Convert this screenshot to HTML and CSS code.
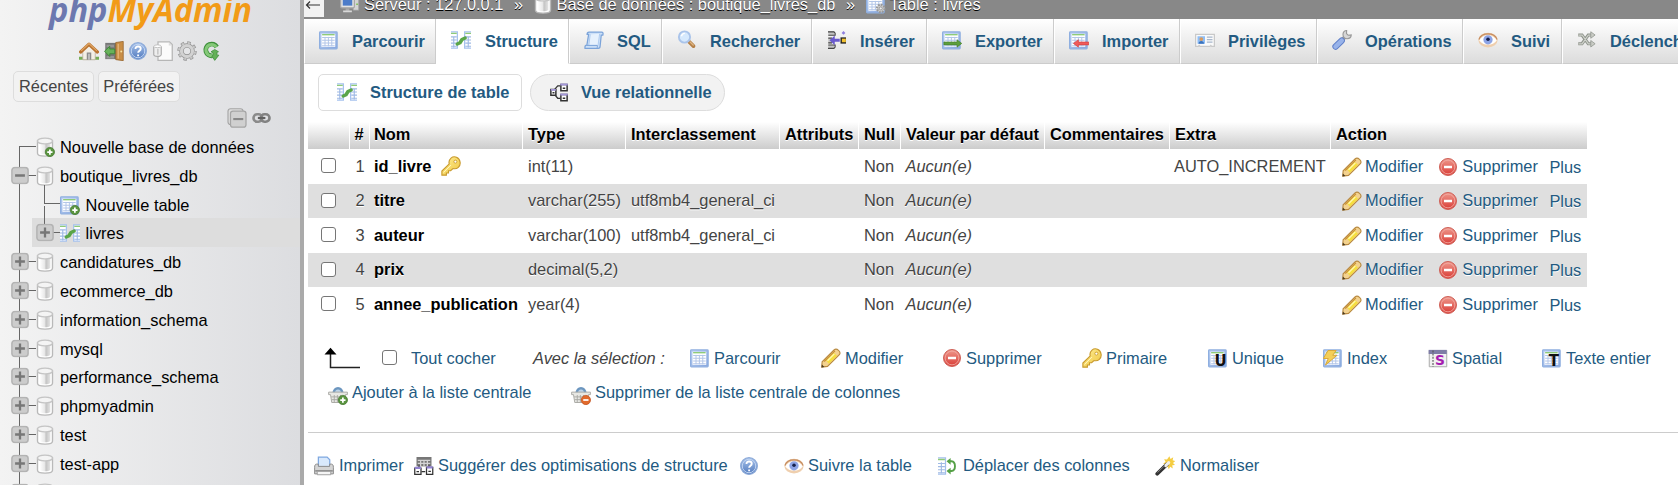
FILE: index.html
```html
<!DOCTYPE html>
<html lang="fr">
<head>
<meta charset="utf-8">
<title>phpMyAdmin</title>
<link rel="stylesheet" href="styles.css">
</head>
<body>
<svg class="sprite" aria-hidden="true">
  <defs>
    <linearGradient id="g-tbl" x1="0" y1="0" x2="1" y2="1"><stop offset="0" stop-color="#bdd2f4"/><stop offset="1" stop-color="#86a6de"/></linearGradient>
    <linearGradient id="g-db"><stop offset="0" stop-color="#fff"/><stop offset=".45" stop-color="#e9e9e9"/><stop offset=".6" stop-color="#c4c4c4"/><stop offset="1" stop-color="#e4e4e4"/></linearGradient>
    <linearGradient id="g-help" x1="0" y1="0" x2="0" y2="1"><stop offset="0" stop-color="#a9c4ec"/><stop offset="1" stop-color="#5079bd"/></linearGradient>
    <linearGradient id="g-red" x1="0" y1="0" x2="0" y2="1"><stop offset="0" stop-color="#ee9a8e"/><stop offset="1" stop-color="#d93a34"/></linearGradient>
    <linearGradient id="g-key" x1="0" y1="0" x2="1" y2="1"><stop offset="0" stop-color="#fff09a"/><stop offset="1" stop-color="#efc43c"/></linearGradient>
  </defs>
  <symbol id="table" viewBox="0 0 16 16"><rect x=".5" y="1.5" width="14" height="13.5" rx=".6" fill="url(#g-tbl)" stroke="#8fafe0"/><path fill="#fff" d="M2 3h11v10.5H2z"/><path fill="#8ecb78" d="M2.5 3.2h10v1.1h-10z"/><path d="M2.5 6h10M2.5 8.2h10M2.5 10.4h10M2.5 12.6h10M4.8 5.5v7.5M7.5 5.5v7.5M10.2 5.5v7.5" stroke="#b3c6e8" stroke-width=".8"/></symbol>
  <symbol id="plus-badge" viewBox="0 0 16 16"><circle cx="11.9" cy="12" r="3.7" fill="#5a9440" stroke="#467a30" stroke-width=".6"/><path d="M11.9 9.9v4.2M9.8 12H14" stroke="#fff" stroke-width="1.4"/></symbol>
  <symbol id="minus-badge" viewBox="0 0 16 16"><circle cx="11.9" cy="12" r="3.7" fill="#e16a2c" stroke="#c2501b" stroke-width=".6"/><path d="M9.8 12H14" stroke="#fff" stroke-width="1.4"/></symbol>
  <symbol id="table-add" viewBox="0 0 16 16"><use href="#table"/><use href="#plus-badge"/></symbol>
  <symbol id="table-gear" viewBox="0 0 16 16"><use href="#table"/><circle cx="11.8" cy="11.5" r="3" fill="#ccc" stroke="#999" stroke-width="1.8" stroke-dasharray="1.4 .9"/><circle cx="11.8" cy="11.5" r="1.2" fill="#eee" stroke="#888" stroke-width=".6"/></symbol>
  <symbol id="structure" viewBox="0 0 16 16"><path fill="#a7c2ee" d="M0 1h5.6v14H0zM10.4 1H16v14h-5.6z"/><path fill="#fff" d="M0 2h4.6v12H0zM11.4 2H16v12h-4.6z"/><path fill="#8ecb78" d="M0 2.2h4.6v1H0zM11.4 2.2H16v1h-4.6z"/><path d="M0 5.5h4.6M0 8h4.6M0 10.5h4.6M0 13h4.6M11.4 5.5H16M11.4 8H16M11.4 10.5H16M11.4 13H16M2.2 5v9M13.8 5v9" stroke="#9fb9e4" stroke-width=".9"/><path d="M5 11.2 7.2 10.200 8.800 7.600l2.500-1.200" fill="none" stroke="#5aa548" stroke-width="2.800" stroke-linecap="round" stroke-linejoin="round"/></symbol>
  <symbol id="db" viewBox="0 0 16 16"><path d="M2 3.2v9.800c0 1.300 2.600 2.300 6 2.300s6-1 6-2.300V3.200z" fill="#fff" stroke="#b9b9b9" stroke-width="1.100"/><path d="M3.700 5.500v7.300c.9.700 2.400 1 4.300 1s3.400-.3 4.300-1V5.500z" fill="url(#g-db)"/><ellipse cx="8" cy="3.200" rx="6" ry="2.300" fill="#f4f4f4" stroke="#c4c4c4" stroke-width="1"/></symbol>
  <symbol id="db-add" viewBox="0 0 16 16"><use href="#db"/><use href="#plus-badge"/></symbol>
  <symbol id="home" viewBox="0 0 16 16"><path fill="#76ad55" d="M0 12.600h16V15H0z"/><path fill="#f3efe6" stroke="#b6ab98" stroke-width=".6" d="M3 7.600 8 3.400l5 4.200V15H3z"/><path fill="#8b8b8b" d="M6.200 9.200h3.600V15H6.200z"/><path fill="#bcbcbc" d="M7.200 10.200h1.600V15H7.200z"/><path d="M1.300 8.800 8 2.600l6.700 6.200" fill="none" stroke="#bb7430" stroke-width="2.600" stroke-linejoin="round" stroke-linecap="round"/><path d="M1.700 7.900 8 2.100l6.300 5.800" fill="none" stroke="#dfa767" stroke-width=".9"/></symbol>
  <symbol id="exit" viewBox="0 0 16 16"><path fill="#777" d="M1 1.500h9v13H1z"/><path fill="#969696" d="M2 3h6v2H2zM2 12h6v2H2z"/><path fill="#c98e46" stroke="#93602a" stroke-width=".6" d="m9.400 1.200 6-.9v15.400l-6-.8z"/><path fill="#e1b073" d="m10.800 2.300 1.200-.2v12l-1.200-.2z"/><circle cx="13.800" cy="8.400" r=".8" fill="#f8e2a0"/><path fill="#67b25a" stroke="#3b8636" stroke-width=".7" d="m.4 8.200 4.200-4v2.200h4v3.800h-4v2.200z"/></symbol>
  <symbol id="help" viewBox="0 0 16 16"><circle cx="8" cy="8" r="6.700" fill="url(#g-help)" stroke="#8facd9"/><circle cx="8" cy="8" r="5.400" fill="none" stroke="#c2d5f2" stroke-width=".8"/><path d="M6 6.300c0-2.600 4.200-2.400 4.200-.1 0 1.600-2 1.500-2.100 3.200M8.100 10.800v1.400" fill="none" stroke="#fff" stroke-width="1.500"/></symbol>
  <symbol id="docs" viewBox="0 0 16 16"><path fill="#fbfbfb" stroke="#b6b6b6" d="M4 .6h9.200l2.200 2.200v12.600H4z"/><path fill="#ddd" d="M12.600 1v2.600h2.400z"/><path d="M.6 4.300v6.500c0 2 6 2 6 0V4.300" fill="#eee" stroke="#aaa" stroke-width=".9"/><ellipse cx="3.600" cy="4.200" rx="3" ry="1.100" fill="#fff" stroke="#bbb" stroke-width=".7"/><path fill="#bbb" d="M3.400 6.200h1v4.600h-1z"/></symbol>
  <symbol id="gear" viewBox="0 0 16 16"><circle cx="8" cy="8" r="6.500" fill="none" stroke="#999" stroke-width="2.600" stroke-dasharray="2.700 2.400"/><circle cx="8" cy="8" r="4.400" fill="none" stroke="#8e8e8e" stroke-width="3.600"/><circle cx="8" cy="8" r="4.400" fill="none" stroke="#d2d2d2" stroke-width="2.600"/><circle cx="8" cy="8" r="6.300" fill="none" stroke="#c8c8c8" stroke-width="1.800" stroke-dasharray="1.700 3.250" stroke-dashoffset="-.45"/></symbol>
  <symbol id="reload" viewBox="0 0 16 16"><path d="M11.800 4.800A4.700 4.700 0 1 0 8.400 11.800" fill="none" stroke="#3d8f3a" stroke-width="3.800"/><path d="M11.500 4.900A4.500 4.500 0 1 0 8.600 11.700" fill="none" stroke="#84c878" stroke-width="2.500"/><path fill="#64b058" stroke="#3d8f3a" stroke-width=".6" d="m7.200 8.600 3-1.800 3 1.800-1.200.3v2.400h1.500l-3.300 4.200-2.400-3.500 1-.5V9.500z"/></symbol>
  <symbol id="collapse" viewBox="0 0 16 16"><rect x=".8" y=".6" width="12" height="12.600" rx="2" fill="#ddd" stroke="#a5a5a5" stroke-width=".9"/><rect x="2.800" y="2.400" width="12.400" height="12.900" rx="2" fill="#d0d0d0" stroke="#a5a5a5"/><path fill="#888" d="M5 8h8v1.700H5z"/></symbol>
  <symbol id="link" viewBox="0 0 16 16"><rect x="2" y="5" width="7" height="6" rx="3" fill="none" stroke="#8b8b8b" stroke-width="2.100"/><rect x="7.800" y="5" width="7" height="6" rx="3" fill="none" stroke="#828282" stroke-width="2.100"/><path d="M5.500 8h6" stroke="#5f5f5f" stroke-width="1.700"/></symbol>
  <symbol id="toggle-plus" viewBox="0 0 18 18"><rect x=".9" y=".9" width="16.200" height="16.200" rx="3" fill="#ccc" stroke="#b3b3b3" stroke-width="1.500"/><path d="M9 4.100v9.800M4.100 9h9.800" stroke="#777" stroke-width="2.300"/></symbol>
  <symbol id="toggle-minus" viewBox="0 0 18 18"><rect x=".9" y=".9" width="16.200" height="16.200" rx="3" fill="#ccc" stroke="#b3b3b3" stroke-width="1.500"/><path d="M4.100 9h9.800" stroke="#777" stroke-width="2.300"/></symbol>
  <symbol id="server" viewBox="0 0 16 16"><path fill="#d4d4d4" stroke="#999" stroke-width=".6" d="M10.500 3H15v10h-4.500z"/><path fill="#7bc04f" d="M13 7.500h1.300v1.200H13z"/><rect x=".5" y="2" width="11" height="9" rx="1" fill="#e2e2e2" stroke="#a7a7a7"/><path fill="#4c7cc9" d="M2.200 3.700h7.600v5.600H2.200z"/><path fill="#aaa" d="M4.500 11.500h3v2h-3z"/><path fill="#d8d8d8" d="M2.500 13.200h7v1.400h-7z"/></symbol>
  <symbol id="sql" viewBox="0 0 16 16"><path fill="#cde1f8" stroke="#7ba3d9" d="M4 1.600c-1 0-1.500.8-1.500 1.800h1.200L2.300 12C1 12 .6 13 .8 14.600h10.600c1 0 1.500-.8 1.500-1.800L13.800 4h1.300c.4-1.500 0-2.400-1-2.400z"/><path d="m5 3.500-1.200 9h7.400L12.500 3" fill="#e6f1fd" stroke="#a9c7ee" stroke-width=".7"/><path d="M2.300 12.300h8.200c.4.900.2 2-.4 2.300" fill="none" stroke="#7ba3d9" stroke-width=".8"/></symbol>
  <symbol id="search" viewBox="0 0 16 16"><path d="m9.600 9.300 3.600 3.600" stroke="#b58047" stroke-width="3" stroke-linecap="round"/><path d="m10.300 9.400 3 3" stroke="#dfb684" stroke-width="1"/><circle cx="6" cy="5.600" r="4.500" fill="#d6e9fd" stroke="#aac4ea" stroke-width="1.500"/><path d="M3.500 5a3 3 0 0 1 2.800-2.300" fill="none" stroke="#fff" stroke-width="1.200"/></symbol>
  <symbol id="insert" viewBox="0 0 16 16"><path fill="#c4c4c4" d="M1 1h5v3H1zM1 12h5v3H1zM1 6.500h3v4H1z"/><path d="M.8 1.500h4.700l1 1v1.700H1M1 6.500h3M1 10.300h3M1 12h5.500v1.700l-1 1H.8" fill="none" stroke="#444" stroke-width=".9"/><path fill="#6a5acd" d="m2 8.200 4.200-3.900v2.700h4v2.400h-4v2.700z"/><path fill="#222" d="M10.800 5.900h4.400v5h-4.400z"/><path fill="#f2c230" d="M11.900 6.900h3.200v2.900h-3.200z"/><path fill="#8f80e0" d="m13.200.8 1.500 1.500-1.500 1.500-1.500-1.500z"/></symbol>
  <symbol id="export" viewBox="0 0 16 16"><use href="#table"/><path fill="#5c9e3c" stroke="#437d2a" stroke-width=".5" d="M1.500 9.600H12V7.800l3.800 2.900-3.800 3v-1.800H1.500z"/></symbol>
  <symbol id="import" viewBox="0 0 16 16"><use href="#table"/><path fill="#ef5b5b" stroke="#d33c3c" stroke-width=".5" d="M15.800 9.600H7.500V7.800l-4 2.900 4 3v-1.800h8.300z"/></symbol>
  <symbol id="rights" viewBox="0 0 16 16"><path fill="#fafafa" stroke="#c9c9c9" d="M.5 3.500h15v9.600h-2.200l-.6-.8-.7.800H4l-.7-.8-.7.800H.5z"/><path fill="#8dbdf6" d="M2 5h6v6H2z"/><path fill="#3b73bd" d="M2.800 11c0-3 4.400-3 4.400 0z"/><circle cx="5" cy="7.200" r="1.500" fill="#d89b5f"/><path d="M9.500 5.700H14M9.500 7.700H14M9.500 9.700H14" stroke="#a8b7cc" stroke-width=".9"/></symbol>
  <symbol id="tools" viewBox="0 0 16 16"><path d="M8.300 7.700 11 5" stroke="#999" stroke-width="3"/><path d="M15.400 3.900a3.300 3.300 0 1 1-3.700-3.500l-.1 2.500 1.300 1.300z" fill="#d6d6d6" stroke="#999" stroke-width=".9"/><path d="m2.800 13.300 5-4.800" stroke="#5f7fc8" stroke-width="5" stroke-linecap="round"/><path d="m2.800 13.300 5-4.800" stroke="#98b3ea" stroke-width="3.500" stroke-linecap="round"/></symbol>
  <symbol id="eye" viewBox="0 0 16 16"><ellipse cx="8" cy="8" rx="7.700" ry="5.900" fill="#efcfae"/><path d="M.7 7.600C3 1.600 13 1.600 15.300 7.600" fill="none" stroke="#c58b5e" stroke-width=".9"/><path d="M1 8.300c3-5.500 11-5.500 14 0-3 4.500-11 4.500-14 0z" fill="#fff"/><circle cx="8" cy="7.800" r="3.700" fill="#8da4e6"/><circle cx="8" cy="7.400" r="1.400" fill="#15204c"/></symbol>
  <symbol id="shuffle" viewBox="0 0 16 16"><g fill="none" stroke="#8e938b" stroke-width="2.500"><path d="M1 4h3l5 7h3M1 11h3l5-7h3"/></g><g fill="none" stroke="#ced1ca" stroke-width="1"><path d="M1.300 4h2.800l5 7h3M1.300 11h2.800l5-7h3"/></g><path d="M11 1.400 14.500 4 11 6.600zM11 8.400l3.500 2.600-3.500 2.600z" fill="#c9ccc5" stroke="#8e938b" stroke-width=".6"/></symbol>
  <symbol id="relation" viewBox="0 0 16 16"><path d="M4 6.500 7 3h2M4 9.500 7 13h2" fill="none" stroke="#333" stroke-width="1"/><g fill="#fff" stroke="#333" stroke-width="1.200"><path d="M1.500 6h4v4.500h-4zM9.500 2h5v5h-5zM9.500 10h5v5h-5z"/></g><path fill="#a397d8" d="M1.500 5.500h4v1.500h-4zM9 1.200h6v1.600H9zM9 9.200h6v1.600H9z"/><path fill="#333" d="M2.800 8h1.600v1.200H2.800zM11 4.300h2v1.300h-2zM11 12.300h2v1.300h-2z"/></symbol>
  <symbol id="key" viewBox="0 0 16 16"><path d="M6.600 6.300.7 12v3.300h3.600v-1.700h1.700v-1.800h1.700L9.600 10c3.400.8 6.100-1.600 5.700-5C14.700 1 10.500-.5 8 1.700 6.600 3 6.100 4.700 6.600 6.300z" fill="url(#g-key)" stroke="#c89a2e" stroke-width=".9"/><circle cx="11.500" cy="4.500" r="1.200" fill="#fff" stroke="#c89a2e" stroke-width=".7"/><path d="m2 13.200 6-6" stroke="#fff6bb" stroke-width=".8"/></symbol>
  <symbol id="pencil" viewBox="0 0 16 16"><path d="M.6 15.300.9 11 10.400 1.600c2.200-1.900 6 1.300 4.300 3.800L5.200 14.700z" fill="#f3d28f" stroke="#b98a41" stroke-width=".9"/><path d="m4 10 6.200-6.300 2.600 2.500-6.500 6.400z" fill="#f6df3f"/><path d="m2.600 10.800 8.600-8.500" stroke="#c88f33" stroke-width=".9"/><path d="m5.200 10.200 5.500-5.500" stroke="#fff9b5" stroke-width="1"/><path d="m.4 15.600.3-2.500 2 2z" fill="#4a3a20"/></symbol>
  <symbol id="drop" viewBox="0 0 16 16"><circle cx="8" cy="8" r="6.800" fill="url(#g-red)" stroke="#cf6158" stroke-width=".8"/><circle cx="8" cy="8" r="5.500" fill="none" stroke="#f1aaa2" stroke-width=".7"/><path fill="#fff" d="M4.800 7h6.400v2H4.800z"/></symbol>
  <symbol id="unique" viewBox="0 0 16 16"><use href="#table"/><text class="letter" x="5.100" y="14.200">U</text></symbol>
  <symbol id="fulltext" viewBox="0 0 16 16"><use href="#table"/><text class="letter" x="5.400" y="14.200">T</text></symbol>
  <symbol id="index" viewBox="0 0 16 16"><use href="#table"/><path d="M4 2h6.500L7.800 5.800h3.400L2 13.600l2.200-5.200H.3z" fill="#f4cf58" stroke="#d9a93a" stroke-width=".8"/></symbol>
  <symbol id="spatial" viewBox="0 0 16 16"><path fill="#f1f1f1" stroke="#aaa" stroke-width=".8" d="M1 2h14v13H1z"/><path fill="#7e7da6" d="M.5 1.500h14.500v3.300H.5z"/><path d="M4 2v13" stroke="#555" stroke-width=".9" stroke-dasharray="1.500 1"/><text class="letter letter--spatial" x="5.500" y="13.800">S</text></symbol>
  <symbol id="basket" viewBox="0 0 16 16"><path d="M4.500 7C4.500 1 11.500 1 11.500 7" fill="#bcd3e8" stroke="#6c96bf" stroke-width="2"/><path fill="#e7e7e3" stroke="#adada8" stroke-width=".8" d="M.5 5.700h15v2H14L13 14H3L2 7.700H.5z"/><path d="M2.500 9.500h11M3 11.700h10M5 8v6M7.500 8v6M10 8v6" stroke="#a6a6a1" stroke-width=".7"/></symbol>
  <symbol id="basket-add" viewBox="0 0 16 16"><use href="#basket"/><use href="#plus-badge"/></symbol>
  <symbol id="basket-del" viewBox="0 0 16 16"><use href="#basket"/><use href="#minus-badge"/></symbol>
  <symbol id="print" viewBox="0 0 16 16"><path fill="#d9e9fc" stroke="#7fa8e0" d="M3.500.8h7L12.600 3v6H3.500z"/><path fill="#d4d4d4" stroke="#8d8d8d" stroke-width=".8" d="M2 6.500h1.500V8.300h9V6.500H14c1 0 1.500 1 1.500 2.500v5.300H.5V9c0-1.500.5-2.500 1.500-2.500z"/><path fill="#888" d="M1 11.300h14v1.200H1z"/><path fill="#f5f5f5" stroke="#999" stroke-width=".7" d="M2.600 12.300h10.800V15H2.600z"/></symbol>
  <symbol id="normalize" viewBox="0 0 16 16"><path fill="#777" d="M2 .8h12v7.500H2z"/><path d="M3 3.500h10M3 5.800h10M5.300 3v5M8 3v5M10.700 3v5" stroke="#d4d4d4" stroke-width="1"/><path d="M4 9V7.500M12 10V7.500M6 12.500h3" stroke="#333"/><g fill="#fff" stroke="#333"><path d="M.6 9.600h5v5H.6zM10 9h5v5.600h-5z"/></g><path fill="#9283d0" d="M.6 8.500h5v1.800h-5zM10 8.200h5V10h-5z"/><path fill="#333" d="M2 12h2v1H2zM11.500 11.800h2v1h-2z"/></symbol>
  <symbol id="move" viewBox="0 0 16 16"><path fill="#a3bfec" d="M0 1h6.500v14H0z"/><path fill="#fff" d="M0 2h5.500v12H0z"/><path fill="#8ecb78" d="M0 2.200h5.500v1.200H0z"/><path d="M0 6h5.500M0 8.500h5.500M0 11h5.500M0 13.400h5.500M2.700 5v9" stroke="#9fb9e4" stroke-width=".9"/><path d="M8.500 4.200h2.300c3.700.4 3.700 7.400 0 7.800H8.500" fill="none" stroke="#55a046" stroke-width="1.500"/><path fill="#55a046" d="m6.800 4.200 3.300-2.700v5.400zM6.800 12l3.300-2.700v5.400z"/></symbol>
  <symbol id="wand" viewBox="0 0 16 16"><path d="m11.500.2.900 2.200L14.600 1l-.5 2.400 2 .7-1.700 1.400 1.600 1.700-2.200.2.400 2.500-2-1.300-1.200 2-.8-2.200L8 9l.8-2L6.500 6l2-1.200L7.300 2.600l2.300.1z" fill="#f5cd42"/><path d="m1.800 14.200 7.700-7.500" stroke="#333" stroke-width="3" stroke-linecap="round"/><path d="m8.500 7.700 2.500-2.400" stroke="#eee" stroke-width="2.400" stroke-linecap="round"/><path d="M2 13.200 8 7.400" stroke="#888" stroke-width=".7"/></symbol>
</svg>

<div class="app">
  <aside class="side">
    <svg class="logo" viewBox="0 0 210 36"><text class="logo__text logo__php" x="3" y="25" textLength="58.500" lengthAdjust="spacingAndGlyphs">php</text><text class="logo__text logo__admin" x="61.500" y="25" textLength="144.500" lengthAdjust="spacingAndGlyphs">MyAdmin</text></svg>
    <nav class="quick">
      <svg class="icon"><use href="#home"/></svg><svg class="icon"><use href="#exit"/></svg><svg class="icon"><use href="#help"/></svg><svg class="icon"><use href="#docs"/></svg><svg class="icon"><use href="#gear"/></svg><svg class="icon"><use href="#reload"/></svg>
    </nav>
    <div class="recent"><span class="recent__btn">Récentes</span><span class="recent__btn">Préférées</span></div>
    <div class="treetools"><svg class="icon"><use href="#collapse"/></svg><svg class="icon"><use href="#link"/></svg></div>
    <ul class="tree">
      <li class="node"><svg class="rail"><path class="wire" d="M19.500 29V14.500H36"/></svg><svg class="icon"><use href="#db-add"/></svg>Nouvelle base de données</li>
      <li class="node"><svg class="rail"><path class="wire" d="M19.500 0v30M28 14.500h8"/><use href="#toggle-minus" x="11" y="5.500" width="18" height="18"/></svg><svg class="icon"><use href="#db"/></svg>boutique_livres_db</li>
      <li class="node"><svg class="rail rail--child"><path class="wire" d="M19.500 0v30M44.500-5V13.500H61M44.500 16v14"/></svg><svg class="icon"><use href="#table-add"/></svg>Nouvelle table</li>
      <li class="node node--current"><svg class="rail rail--child"><path class="wire" d="M19.500 0v30M44.500 0v7M53 14.500h7"/><use href="#toggle-plus" x="36" y="5.500" width="18" height="18"/></svg><svg class="icon"><use href="#structure"/></svg>livres</li>
      <li class="node"><svg class="rail"><path class="wire" d="M19.500 0v30M28 14.500h8"/><use href="#toggle-plus" x="11" y="5.500" width="18" height="18"/></svg><svg class="icon"><use href="#db"/></svg>candidatures_db</li>
      <li class="node"><svg class="rail"><path class="wire" d="M19.500 0v30M28 14.500h8"/><use href="#toggle-plus" x="11" y="5.500" width="18" height="18"/></svg><svg class="icon"><use href="#db"/></svg>ecommerce_db</li>
      <li class="node"><svg class="rail"><path class="wire" d="M19.500 0v30M28 14.500h8"/><use href="#toggle-plus" x="11" y="5.500" width="18" height="18"/></svg><svg class="icon"><use href="#db"/></svg>information_schema</li>
      <li class="node"><svg class="rail"><path class="wire" d="M19.500 0v30M28 14.500h8"/><use href="#toggle-plus" x="11" y="5.500" width="18" height="18"/></svg><svg class="icon"><use href="#db"/></svg>mysql</li>
      <li class="node"><svg class="rail"><path class="wire" d="M19.500 0v30M28 14.500h8"/><use href="#toggle-plus" x="11" y="5.500" width="18" height="18"/></svg><svg class="icon"><use href="#db"/></svg>performance_schema</li>
      <li class="node"><svg class="rail"><path class="wire" d="M19.500 0v30M28 14.500h8"/><use href="#toggle-plus" x="11" y="5.500" width="18" height="18"/></svg><svg class="icon"><use href="#db"/></svg>phpmyadmin</li>
      <li class="node"><svg class="rail"><path class="wire" d="M19.500 0v30M28 14.500h8"/><use href="#toggle-plus" x="11" y="5.500" width="18" height="18"/></svg><svg class="icon"><use href="#db"/></svg>test</li>
      <li class="node"><svg class="rail"><path class="wire" d="M19.500 0v30M28 14.500h8"/><use href="#toggle-plus" x="11" y="5.500" width="18" height="18"/></svg><svg class="icon"><use href="#db"/></svg>test-app</li>
      <li class="node"><svg class="rail"><path class="wire" d="M19.500 0v6"/><use href="#toggle-plus" x="11" y="5.500" width="18" height="18"/></svg><svg class="icon"><use href="#db"/></svg></li>
    </ul>
  </aside>
  <div class="resizer"></div>
  <main class="main">
    <header class="crumbs">
      <span class="back"><svg class="back__arrow" viewBox="0 0 20 10"><path d="M16 5H2.500M6 1.500 2.500 5 6 8.500" fill="none" stroke="#333" stroke-width="1.200"/></svg></span>
      <span class="crumb crumb--server"><svg class="icon"><use href="#server"/></svg>Serveur : 127.0.0.1</span><span class="sep">»</span>
      <span class="crumb crumb--db"><svg class="icon"><use href="#db"/></svg>Base de données : boutique_livres_db</span><span class="sep">»</span>
      <span class="crumb"><svg class="icon"><use href="#table-gear"/></svg>Table : livres</span>
    </header>
    <nav class="tabs">
      <a class="tab"><svg class="icon"><use href="#table"/></svg>Parcourir</a>
      <a class="tab tab--active"><svg class="icon"><use href="#structure"/></svg>Structure</a>
      <a class="tab"><svg class="icon"><use href="#sql"/></svg>SQL</a>
      <a class="tab"><svg class="icon"><use href="#search"/></svg>Rechercher</a>
      <a class="tab"><svg class="icon"><use href="#insert"/></svg>Insérer</a>
      <a class="tab"><svg class="icon"><use href="#export"/></svg>Exporter</a>
      <a class="tab"><svg class="icon"><use href="#import"/></svg>Importer</a>
      <a class="tab"><svg class="icon"><use href="#rights"/></svg>Privilèges</a>
      <a class="tab"><svg class="icon"><use href="#tools"/></svg>Opérations</a>
      <a class="tab"><svg class="icon"><use href="#eye"/></svg>Suivi</a>
      <a class="tab"><svg class="icon"><use href="#shuffle"/></svg>Déclencheurs</a>
    </nav>
    <div class="subtabs">
      <a class="subtab"><svg class="icon"><use href="#structure"/></svg>Structure de table</a>
      <a class="subtab subtab--pill"><svg class="icon"><use href="#relation"/></svg>Vue relationnelle</a>
    </div>
    <table class="cols">
      <colgroup><col class="c-check"><col class="c-num"><col class="c-name"><col class="c-type"><col class="c-coll"><col class="c-attr"><col class="c-null"><col class="c-def"><col class="c-com"><col class="c-extra"><col class="c-act"></colgroup>
      <thead><tr><th></th><th>#</th><th>Nom</th><th>Type</th><th>Interclassement</th><th>Attributs</th><th>Null</th><th>Valeur par défaut</th><th>Commentaires</th><th>Extra</th><th>Action</th></tr></thead>
      <tbody>
        <tr><td><span class="check"></span></td><td>1</td><td><b class="name">id_livre<svg class="icon"><use href="#key"/></svg></b></td><td>int(11)</td><td></td><td></td><td>Non</td><td><i>Aucun(e)</i></td><td></td><td>AUTO_INCREMENT</td><td><div class="acts"><a class="act"><svg class="icon"><use href="#pencil"/></svg>Modifier</a><a class="act"><svg class="icon"><use href="#drop"/></svg>Supprimer</a><a class="act act--more">Plus</a></div></td></tr>
        <tr><td><span class="check"></span></td><td>2</td><td><b class="name">titre</b></td><td>varchar(255)</td><td>utf8mb4_general_ci</td><td></td><td>Non</td><td><i>Aucun(e)</i></td><td></td><td></td><td><div class="acts"><a class="act"><svg class="icon"><use href="#pencil"/></svg>Modifier</a><a class="act"><svg class="icon"><use href="#drop"/></svg>Supprimer</a><a class="act act--more">Plus</a></div></td></tr>
        <tr><td><span class="check"></span></td><td>3</td><td><b class="name">auteur</b></td><td>varchar(100)</td><td>utf8mb4_general_ci</td><td></td><td>Non</td><td><i>Aucun(e)</i></td><td></td><td></td><td><div class="acts"><a class="act"><svg class="icon"><use href="#pencil"/></svg>Modifier</a><a class="act"><svg class="icon"><use href="#drop"/></svg>Supprimer</a><a class="act act--more">Plus</a></div></td></tr>
        <tr><td><span class="check"></span></td><td>4</td><td><b class="name">prix</b></td><td>decimal(5,2)</td><td></td><td></td><td>Non</td><td><i>Aucun(e)</i></td><td></td><td></td><td><div class="acts"><a class="act"><svg class="icon"><use href="#pencil"/></svg>Modifier</a><a class="act"><svg class="icon"><use href="#drop"/></svg>Supprimer</a><a class="act act--more">Plus</a></div></td></tr>
        <tr><td><span class="check"></span></td><td>5</td><td><b class="name">annee_publication</b></td><td>year(4)</td><td></td><td></td><td>Non</td><td><i>Aucun(e)</i></td><td></td><td></td><td><div class="acts"><a class="act"><svg class="icon"><use href="#pencil"/></svg>Modifier</a><a class="act"><svg class="icon"><use href="#drop"/></svg>Supprimer</a><a class="act act--more">Plus</a></div></td></tr>
      </tbody>
    </table>
    <div class="bulk">
      <svg class="bulk__arrow" viewBox="0 0 38 22"><path d="M6.500 6v14.500H36" fill="none" stroke="#222" stroke-width="1.500"/><path d="M.5 7.500 6.500.8l6 6.700z"/></svg>
      <span class="check"></span>
      <a>Tout cocher</a>
      <i>Avec la sélection :</i>
      <a class="act"><svg class="icon"><use href="#table"/></svg>Parcourir</a>
      <a class="act"><svg class="icon"><use href="#pencil"/></svg>Modifier</a>
      <a class="act"><svg class="icon"><use href="#drop"/></svg>Supprimer</a>
      <a class="act"><svg class="icon"><use href="#key"/></svg>Primaire</a>
      <a class="act"><svg class="icon"><use href="#unique"/></svg>Unique</a>
      <a class="act"><svg class="icon"><use href="#index"/></svg>Index</a>
      <a class="act"><svg class="icon"><use href="#spatial"/></svg>Spatial</a>
      <a class="act"><svg class="icon"><use href="#fulltext"/></svg>Texte entier</a>
    </div>
    <div class="central">
      <a class="act"><svg class="icon"><use href="#basket-add"/></svg>Ajouter à la liste centrale</a>
      <a class="act"><svg class="icon"><use href="#basket-del"/></svg>Supprimer de la liste centrale de colonnes</a>
    </div>
    <div class="footer">
      <a class="act"><svg class="icon"><use href="#print"/></svg>Imprimer</a>
      <a class="act"><svg class="icon"><use href="#normalize"/></svg>Suggérer des optimisations de structure</a>
      <a class="act"><svg class="icon"><use href="#help"/></svg></a>
      <a class="act"><svg class="icon"><use href="#eye"/></svg>Suivre la table</a>
      <a class="act"><svg class="icon"><use href="#move"/></svg>Déplacer des colonnes</a>
      <a class="act"><svg class="icon"><use href="#wand"/></svg>Normaliser</a>
    </div>
  </main>
</div>
</body>
</html>
```
FILE: styles.css
```css
* { box-sizing: border-box; }
body {
  margin: 0;
  overflow: hidden;
  background: #fff;
  color: #444;
  font: 16.4px/20px "Liberation Sans", Arial, sans-serif;
  white-space: nowrap;
}
.sprite { display: block; width: 0; height: 0; overflow: hidden; }
.app { display: flex; height: 485px; overflow: hidden; }
.icon { display: block; flex: none; width: 20px; height: 20px; }
.letter { font: bold 12px "DejaVu Sans", sans-serif; fill: #111; }
.letter--spatial { font-size: 11px; fill: #a51cb0; }

/* Navigation panel */
.side {
  flex: none;
  width: 300px;
  overflow: hidden;
  background: linear-gradient(to right, #f3f3f3, #dcdde0);
  color: #000;
}
.resizer { flex: none; width: 4px; background: #aaa; }
.logo { display: block; width: 210px; height: 36px; margin: -3px 0 0 46px; }
.logo__text { font: italic bold 34px "Open Sans", sans-serif; }
.logo__php { fill: #6c78af; }
.logo__admin { fill: #f29b17; }
.quick { display: flex; gap: 4.600px; padding: 8px 0 0 79px; }
.recent { display: flex; gap: 4px; padding: 10px 0 0 13px; }
.recent__btn {
  height: 31px;
  padding: 4px 5px 0;
  border: 1px solid #ddd;
  border-radius: 5px;
  background: #f2f2f2;
  color: #444;
}
.recent__btn + .recent__btn { padding: 4px 5px 0 4px; }
.treetools { display: flex; gap: 4px; padding: 6px 0 0 227px; }
.tree { margin: 4px 0 0; padding: 0; list-style: none; }
.node { display: flex; height: 28.800px; line-height: 30.500px; }
.node .icon { margin: 5px 5px 0 -1px; }
.node .rail--child + .icon { margin-right: 5.600px; }
.node--current { background: linear-gradient(to right, transparent 32px, #ddd 32px); }
.rail { flex: none; width: 36px; height: 28px; overflow: visible; }
.rail--child { width: 61px; }
.wire { fill: none; stroke: #666; stroke-width: 1; shape-rendering: crispEdges; }

/* Breadcrumb bar */
.main { flex: 1; min-width: 0; overflow: hidden; }
.crumbs {
  display: flex;
  align-items: flex-end;
  height: 19px;
  background: #888;
  color: #fff;
  text-shadow: 0 1px 0 #000;
}
.crumbs .icon { margin-right: 4px; }
.crumb { display: flex; padding-bottom: 5px; }
.crumb--server { margin-left: 16px; }
.crumb--db { margin-left: -1px; }
.sep { padding: 0 10.500px 5px; }
.back { align-self: flex-start; width: 20px; height: 17px; background: #f2f2f2; }
.back__arrow { display: block; width: 20px; height: 10px; }

/* Main tabs */
.tabs { display: flex; height: 45px; }
.tab {
  display: flex;
  flex: none;
  align-items: center;
  gap: 13px;
  padding: 0 0 1px 14px;
  border-right: 1px solid #ccc;
  border-bottom: 1px solid #ccc;
  border-left: 1px solid #fff;
  background: linear-gradient(#fff, #dcdcdc);
  color: #235a81;
  font-weight: bold;
}
.tab .icon { margin-top: -2px; }
.tab--active { border-bottom-color: #fff; background: #fff; }
.tab:nth-child(1) { width: 132px; }
.tab:nth-child(2) { width: 133px; padding-left: 14px; gap: 14px; }
.tab:nth-child(3) { width: 93px; }
.tab:nth-child(4) { width: 150px; }
.tab:nth-child(5) { width: 115px; }
.tab:nth-child(6) { width: 127px; }
.tab:nth-child(7) { width: 126px; }
.tab:nth-child(8) { width: 137px; }
.tab:nth-child(9) { width: 146px; }
.tab:nth-child(10) { width: 99px; }
.tab:nth-child(11) { width: 170px; }

.subtabs { display: flex; gap: 8px; padding: 10px 0 0 14px; }
.subtab {
  display: flex;
  align-items: center;
  gap: 13px;
  width: 204px;
  height: 37px;
  padding: 0 0 2px 18px;
  border: 1px solid #ddd;
  border-radius: 5px;
  color: #235a81;
  font-weight: bold;
}
.subtab--pill { width: 195px; gap: 12px; border-radius: 19px; background: #f2f2f2; }

/* Column list */
.cols {
  width: 1279px;
  margin: 11px 0 0 4px;
  border-collapse: separate;
  border-spacing: 0;
  table-layout: fixed;
}
.c-check { width: 42px; }
.c-num { width: 20px; }
.c-name { width: 153px; }
.c-type { width: 103px; }
.c-coll { width: 154px; }
.c-attr { width: 79px; }
.c-null { width: 42px; }
.c-def { width: 144px; }
.c-com { width: 125px; }
.c-extra { width: 161px; }
.c-act { width: 256px; }
.cols th {
  height: 27px;
  padding: 0 0 3px 5px;
  border-right: 1px solid #fff;
  background: linear-gradient(#fff, #ccc);
  color: #000;
  text-align: left;
  text-shadow: 0 1px 0 #fff;
}
.cols th:last-child { border-right: 0; }
.cols td { height: 34.500px; padding: 0 0 1px 5px; }
.cols td:nth-child(8), .cols th:nth-child(2) { padding-left: 4.500px; }
.cols td:nth-child(2) { padding-left: 5.500px; }
.cols td:nth-child(3), .cols th:nth-child(3), .cols td:nth-child(10) { padding-left: 4px; }
.cols tbody tr:nth-child(even) { background: #dfdfdf; }
.cols tbody tr:nth-child(even) td { text-shadow: 0 1px 0 #fff; }
.check { display: block; width: 15px; height: 15px; border: 1px solid #767676; border-radius: 3px; background: #fff; }
.cols .check { margin: 0 0 0 8px; }
.name { display: flex; gap: 10px; color: #000; }
.acts { display: flex; padding: 1px 0 0 6px; }
.act { display: flex; gap: 4px; color: #235a81; }
.acts .icon { margin-top: 1px; }
.acts .act:first-child { gap: 3px; }
.acts .act + .act { margin-left: 15px; gap: 4px; }
.acts .act + .act--more { margin: 1px 0 0 11.500px; }

/* Bulk actions */
.bulk, .central { display: grid; align-items: center; }
.bulk a, .central a { color: #235a81; }
.bulk {
  grid-template-columns: 58px 29px 122px 157px 131px 121px 140px 126px 115px 105px 114px auto;
  height: 22px;
  margin: 25px 0 0 20px;
}
.bulk__arrow { width: 38px; height: 22px; }
.central { grid-template-columns: 243px auto; margin: 13px 0 0 24px; }
.central .icon { margin-top: 3px; }
.central .act { gap: 4px; height: 22px; }

.footer {
  display: grid;
  grid-template-columns: 100px 325px 45px 154px 217px auto;
  align-items: center;
  margin: 28px 0 0 4px;
  padding: 22px 0 0 6px;
  border-top: 1px solid #ccc;
}
.footer .icon { margin-top: 1px; }
.footer .act { gap: 5px; }
.footer .act:nth-child(2) { gap: 4px; }
.footer .act:nth-child(4) { gap: 4px; }
```
